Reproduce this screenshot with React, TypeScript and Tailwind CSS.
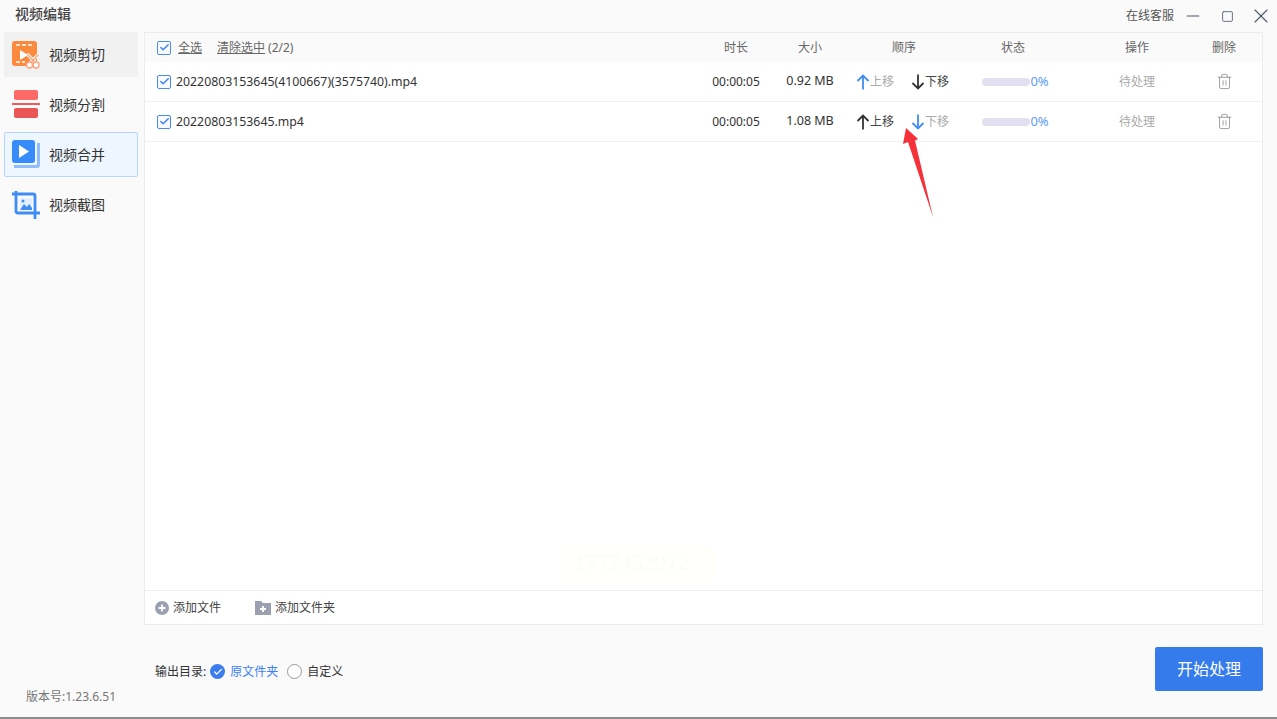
import { Minus, Square, X, Check, Trash2 } from 'lucide-react';

const font = { fontFamily: '"Noto Sans", "Noto Sans CJK SC", sans-serif' };
const rowGrid = 'grid grid-cols-[1fr_72px_76px_112px_106px_142px_32px] items-center pl-[12px] pr-[22px]';

const CheckBox = () => (
	<span className="flex h-[14px] w-[14px] shrink-0 items-center justify-center rounded-[2px] border-[1.5px] border-[#4a8cf0] bg-[#f7faff]">
		<Check className="h-[11px] w-[11px] text-[#3b82f6]" strokeWidth={3} />
	</span>
);

const Arrow = ({ up, blue }: { up: boolean; blue: boolean }) => (
	<svg width="14" height="16" viewBox="0 0 14 16" fill="none" stroke={blue ? '#3f8cf2' : '#333'} strokeWidth="1.8">
		{up ? <path d="M7 15.5V1.5M1.5 7L7 1.5L12.5 7" /> : <path d="M7 .5V14.5M1.5 9L7 14.5L12.5 9" />}
	</svg>
);

const CutIcon = () => (
	<svg width="28" height="28" viewBox="0 0 28 28">
		<rect x="0" y="0" width="25" height="25" rx="3" fill="#fb8a3e" />
		<path d="M4 4h4M10 4h4M16 4h4M4 21h4M10 21h3" stroke="#fff" strokeWidth="1.6" />
		<path d="M8 9l8 5-8 5z" fill="#fff" />
		<path d="M15 13l9 9M27 13l-9 9" stroke="#fff" strokeWidth="3.2" />
		<path d="M15.5 13.5l8 8.5M26.5 13.5l-8 8.5" stroke="#fca27a" strokeWidth="1.4" />
		<circle cx="17.5" cy="24" r="3" fill="#fff" stroke="#fca27a" strokeWidth="1.4" />
		<circle cx="24" cy="24" r="3" fill="#fff" stroke="#fca27a" strokeWidth="1.4" />
	</svg>
);

const SplitIcon = () => (
	<svg width="28" height="30" viewBox="0 0 28 30">
		<rect x="2" y="0" width="24" height="10" rx="2" fill="#fd6b68" />
		<rect x="0" y="13" width="28" height="2" fill="#f25b5b" />
		<rect x="2" y="18" width="24" height="10" rx="2" fill="#e95656" />
	</svg>
);

const MergeIcon = () => (
	<svg width="28" height="30" viewBox="0 0 28 30">
		<path d="M25 3h3v22a3 3 0 0 1-3 3H2v-3h23z" fill="#8fbcfa" />
		<rect x="0" y="0" width="23" height="23" rx="3" fill="#388bfb" />
		<path d="M7 5l10 6.5L7 18z" fill="#fff" />
	</svg>
);

const CropIcon = () => (
	<svg width="28" height="28" viewBox="0 0 28 28">
		<path d="M0 3h21a2 2 0 0 1 2 2v23M4 0v20a2 2 0 0 0 2 2h22" fill="none" stroke="#3f8cf2" strokeWidth="2.8" />
		<rect x="8" y="7" width="12" height="12" fill="#e3efff" />
		<circle cx="11" cy="10" r="1.5" fill="#3f8cf2" />
		<path d="M8 19l4-6 3 3 2-3 3 4v2z" fill="#3f8cf2" />
	</svg>
);

const NavItem = ({ icon, label, active, hover }: { icon: React.ReactNode; label: string; active?: boolean; hover?: boolean }) => (
	<div
		className={`flex h-[45px] w-[134px] items-center gap-[9px] rounded-[2px] text-[14px] text-[#333] ${
			active ? 'border border-[#b8d6fb] bg-[#eef6ff] pl-[7px]' : hover ? 'bg-[#f1f1f1] pl-[8px]' : 'pl-[8px]'
		}`}
	>
		{icon}
		<span>{label}</span>
	</div>
);

const FileRow = ({ name, size, upActive }: { name: string; size: string; upActive: boolean }) => (
	<div className={`${rowGrid} h-[40px] border-b border-[#f0f0f0] text-[12.3px] text-[#333]`}>
		<div className="flex items-center gap-[5px]">
			<CheckBox />
			<span className="leading-[18px]">{name}</span>
		</div>
		<span className="text-center text-[12px]">00:00:05</span>
		<span className="text-center text-[12.5px]">{size}</span>
		<div className="flex items-center justify-center gap-[17px] pr-[3px] text-[12px]">
			<span className={`flex items-center ${upActive ? 'text-[#aaa]' : 'text-[#444]'}`}>
				<Arrow up blue={upActive} />
				上移
			</span>
			<span className={`flex items-center ${upActive ? 'text-[#444]' : 'text-[#aaa]'}`}>
				<Arrow up={false} blue={!upActive} />
				下移
			</span>
		</div>
		<div className="flex items-center justify-center pl-[5px] text-[13px] text-[#5b9bf5]">
			<span className="h-[8px] w-[48px] rounded-full bg-[#e0e0f0]" />
			0%
		</div>
		<span className="text-center text-[12px] text-[#aaa]">待处理</span>
		<span className="flex justify-center">
			<Trash2 className="h-[17px] w-[17px] text-[#999]" strokeWidth={1.3} />
		</span>
	</div>
);

const App = () => {
	return (
		<div className="flex h-screen w-full flex-col overflow-hidden bg-[#fafafa]" style={font}>
			{/* Title bar */}
			<div className="flex h-[32px] shrink-0 items-center justify-between pl-[15px] pr-[4px]">
				<span className="mb-[5px] text-[14px] font-medium text-[#444]">视频编辑</span>
				<div className="flex items-center text-[#4a5568]">
					<span className="mr-[9px] text-[12px] text-[#555]">在线客服</span>
					<Minus className="h-[20px] w-[20px]" strokeWidth={1.3} />
					<Square className="ml-[18px] h-[13px] w-[13px]" strokeWidth={1.5} />
					<X className="ml-[15px] h-[24px] w-[24px]" strokeWidth={1.1} />
				</div>
			</div>

			<div className="flex min-h-0 flex-1">
				{/* Sidebar */}
				<div className="flex w-[144px] shrink-0 flex-col pl-[4px]">
					<div className="flex flex-1 flex-col gap-[5px]">
						<NavItem icon={<CutIcon />} label="视频剪切" hover />
						<NavItem icon={<SplitIcon />} label="视频分割" />
						<NavItem icon={<MergeIcon />} label="视频合并" active />
						<NavItem icon={<CropIcon />} label="视频截图" />
					</div>
					<div className="mb-[11px] pl-[22px] text-[12px] text-[#777]">版本号:1.23.6.51</div>
				</div>

				{/* Main */}
				<div className="flex min-w-0 flex-1 flex-col pr-[14px]">
					<div className="relative flex h-[593px] flex-col border border-[#ececec] bg-white">
						<div className={`${rowGrid} h-[29px] shrink-0 bg-[#fafafa] text-[12px] text-[#666]`}>
							<div className="flex items-center">
								<CheckBox />
								<span className="ml-[7px] underline">全选</span>
								<span className="ml-[15px] underline">清除选中</span>
								<span className="ml-[3px]">(2/2)</span>
							</div>
							<span className="text-center">时长</span>
							<span className="text-center">大小</span>
							<span className="text-center">顺序</span>
							<span className="text-center">状态</span>
							<span className="text-center">操作</span>
							<span className="text-center">删除</span>
						</div>
						<FileRow name="20220803153645(4100667)(3575740).mp4" size="0.92 MB" upActive />
						<FileRow name="20220803153645.mp4" size="1.08 MB" upActive={false} />
						<div className="flex-1" />

						<div className="flex h-[34px] shrink-0 items-center border-t border-[#ececec] pl-[10px] text-[12px] text-[#444]">
							<svg width="14" height="14" viewBox="0 0 14 14">
								<circle cx="7" cy="7" r="7" fill="#9aa0b0" />
								<path d="M7 3.5v7M3.5 7h7" stroke="#fff" strokeWidth="1.8" />
							</svg>
							<span className="ml-[4px]">添加文件</span>
							<svg className="ml-[34px]" width="16" height="14" viewBox="0 0 16 14">
								<path d="M0 0h6l2 2h8v12H0z" fill="#9aa0b0" />
								<path d="M8 5v6M5 8h6" stroke="#fff" strokeWidth="1.8" />
							</svg>
							<span className="ml-[4px]">添加文件夹</span>
						</div>

						{/* Faint watermark */}
						<div className="absolute left-[417px] top-[513px] flex h-[35px] w-[154px] items-center bg-[#fffffb] pl-[12px] text-[23px] text-[#fcfcf9]" style={{ fontFamily: '"Liberation Serif", serif' }}>
							1772432972
						</div>
						{/* Annotation arrow */}
						<svg className="absolute left-[755px] top-[92px]" width="34" height="95" viewBox="0 0 34 95">
							<path d="M6 3L3 19L8 17L33 92L15 15.5L18 14z" fill="#f5313a" />
						</svg>
					</div>

					<div className="flex flex-1 items-center justify-between pl-[11px] pt-[1px]">
						<div className="flex items-center text-[12px] text-[#333]">
							<span>输出目录:</span>
							<span className="ml-[4px] flex h-[15px] w-[15px] items-center justify-center rounded-full bg-[#3b7dec]">
								<Check className="h-[10px] w-[10px] text-white" strokeWidth={3} />
							</span>
							<span className="ml-[5px] text-[#3b82f6]">原文件夹</span>
							<span className="ml-[9px] h-[15px] w-[15px] rounded-full border border-[#999] bg-white" />
							<span className="ml-[5px]">自定义</span>
						</div>
						<button className="mb-[6px] h-[44px] w-[108px] rounded-[2px] bg-[#367bec] text-[16px] text-white">开始处理</button>
					</div>
				</div>
			</div>
			<div className="h-[2px] shrink-0 bg-[#8c8c8c]" />
		</div>
	);
};

export default App;
